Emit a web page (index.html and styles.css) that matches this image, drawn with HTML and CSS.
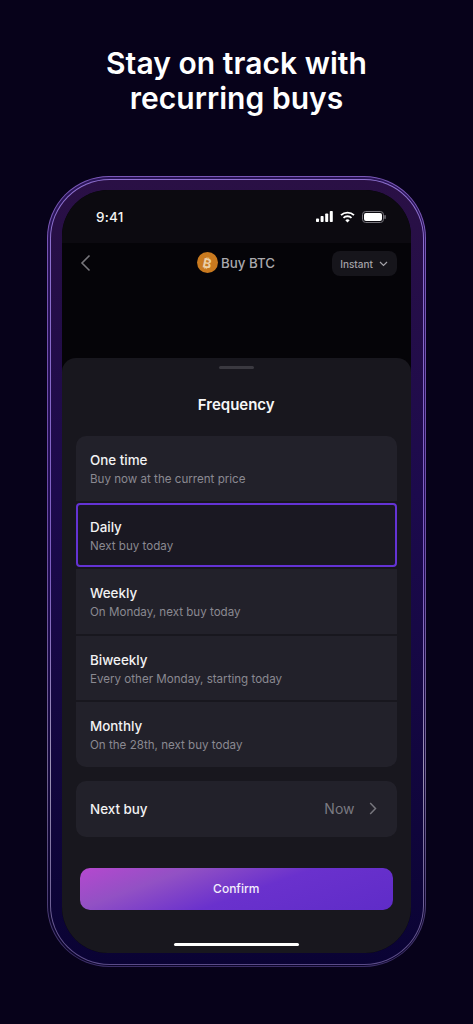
FILE: index.html
```html
<!DOCTYPE html>
<html lang="en">
<head>
<meta charset="utf-8">
<title>Stay on track with recurring buys</title>
<link rel="stylesheet" href="styles.css">
</head>
<body>
<main class="page">
  <h1 class="headline">Stay on track with<br>recurring buys</h1>
  <div class="phone">
    <div class="phone-inner">
      <div class="ring">
        <div class="bezel">
          <div class="screen">
            <div class="status">
              <span class="clock">9:41</span>
              <div class="status-icons">
                <svg width="17" height="11" viewBox="0 0 17 11"><rect x="0" y="7.500" width="3" height="3.500" rx=".8"/><rect x="4.600" y="5" width="3" height="6" rx=".8"/><rect x="9.200" y="2.500" width="3" height="8.500" rx=".8"/><rect x="13.800" y="0" width="3" height="11" rx=".8"/></svg>
                <svg width="15" height="12" viewBox="0 0 15 12"><path d="M1 4.200a9.300 9.300 0 0 1 13 0" fill="none" stroke="#fff" stroke-width="1.800"/><path d="M3.500 6.900a5.700 5.700 0 0 1 8 0" fill="none" stroke="#fff" stroke-width="1.800"/><path d="M5.300 9.200a3.200 3.200 0 0 1 4.400 0L7.500 11.600z"/></svg>
                <svg width="24" height="12" viewBox="0 0 24 12"><rect x=".5" y=".5" width="21" height="11" rx="3.200" fill="none" stroke="#77757c"/><rect x="2" y="2" width="18" height="8" rx="2"/><rect x="22.300" y="4" width="1.500" height="4" rx=".7" fill="#77757c"/></svg>
              </div>
            </div>
            <div class="nav">
              <svg class="back" width="11" height="18" viewBox="0 0 11 18"><path d="M9.500 1.500 2 9l7.500 7.500" fill="none" stroke="#77767b" stroke-width="1.600"/></svg>
              <div class="nav-title">
                <span class="coin"><span class="coin-mark">₿</span></span>
                <span>Buy BTC</span>
              </div>
              <div class="speed">
                <span>Instant</span>
                <svg width="9" height="6" viewBox="0 0 9 6"><path d="M1 1l3.500 3.500L8 1" fill="none" stroke="#a3a2a8" stroke-width="1.200"/></svg>
              </div>
            </div>
            <section class="sheet">
              <div class="handle"></div>
              <h2 class="sheet-title">Frequency</h2>
              <div class="options">
                <div class="option first">
                  <div class="option-name">One time</div>
                  <div class="option-desc">Buy now at the current price</div>
                </div>
                <div class="option selected">
                  <div class="option-name">Daily</div>
                  <div class="option-desc">Next buy today</div>
                </div>
                <div class="option">
                  <div class="option-name">Weekly</div>
                  <div class="option-desc">On Monday, next buy today</div>
                </div>
                <div class="option">
                  <div class="option-name">Biweekly</div>
                  <div class="option-desc">Every other Monday, starting today</div>
                </div>
                <div class="option last">
                  <div class="option-name">Monthly</div>
                  <div class="option-desc">On the 28th, next buy today</div>
                </div>
              </div>
              <div class="next-buy">
                <span class="option-name">Next buy</span>
                <div class="next-value">
                  <span>Now</span>
                  <svg width="8" height="13" viewBox="0 0 8 13"><path d="M1.200 1 6.500 6.500 1.200 12" fill="none" stroke="#77767d" stroke-width="1.500"/></svg>
                </div>
              </div>
              <button class="confirm">Confirm</button>
              <div class="home"></div>
            </section>
          </div>
        </div>
      </div>
    </div>
  </div>
</main>
</body>
</html>
```
FILE: styles.css
```css
* { box-sizing: border-box; }
html, body { margin: 0; padding: 0; }
body {
  width: 473px;
  height: 1024px;
  overflow: hidden;
  background: #07021a;
  font-family: Inter, "Noto Sans", sans-serif;
  color: #fff;
}
.page {
  height: 1024px;
  padding: 46px 47px 0;
  display: flex;
  flex-direction: column;
}
.headline {
  margin: 0 -20px;
  font-size: 30px;
  line-height: 35px;
  font-weight: 600;
  text-align: center;
  letter-spacing: 0.05px;
  color: #fff;
}
.phone {
  margin-top: 60px;
  width: 379px;
  height: 791px;
  padding: 1px;
  border-radius: 62px;
  background: linear-gradient(180deg, #7a58b8 0%, #6a4aa6 40%, #6f6190 75%, #3a2c66 100%);
}
.phone-inner {
  height: 100%;
  padding: 1.500px;
  border-radius: 61px;
  background: linear-gradient(180deg, #2a1458 0%, #1f0c52 50%, #0a0428 100%);
}
.ring {
  height: 100%;
  padding: 1px;
  border-radius: 59.500px;
  background: linear-gradient(180deg, #8f72d0 0%, #7c5cc0 50%, #9d93b5 75%, #5a4a88 100%);
}
.bezel {
  height: 100%;
  padding: 10.500px 12px 10.500px 11.500px;
  border-radius: 58.500px;
  background: linear-gradient(180deg, #2a1045 0%, #1c0a4c 40%, #0a0334 100%);
}
.screen {
  height: 100%;
  border-radius: 46px;
  overflow: hidden;
  background: #050408;
  display: flex;
  flex-direction: column;
}
.status {
  height: 53px;
  flex: none;
  padding: 0 25px 0 34px;
  background: #0c0a10;
  display: flex;
  align-items: center;
  justify-content: space-between;
}
.clock { font-size: 13.500px; font-weight: 500; color: #f4f4f4; letter-spacing: 0.2px; }
.status-icons { display: flex; align-items: center; gap: 7px; }
.status-icons svg { fill: #fff; display: block; }
.nav {
  height: 115px;
  flex: none;
  padding: 8px 14px 0 18px;
  display: flex;
  align-items: flex-start;
  position: relative;
}
.back { margin-top: 3px; }
.nav-title {
  position: absolute;
  left: 135px;
  top: 9px;
  display: flex;
  align-items: center;
  gap: 3px;
  font-size: 13.300px;
  font-weight: 500;
  color: #aaa9ad;
}
.coin {
  width: 21px;
  height: 21px;
  border-radius: 50%;
  background: #c97a1f;
  color: #ecd0a6;
  font-size: 13px;
  font-weight: 700;
  display: flex;
  align-items: center;
  justify-content: center;
}
.coin-mark { display: block; transform: rotate(12deg); }
.speed {
  margin-left: auto;
  height: 25px;
  width: 65px;
  border-radius: 8px;
  background: #16151b;
  font-size: 10px;
  font-weight: 500;
  color: #a3a2a8;
  display: flex;
  align-items: center;
  justify-content: center;
  gap: 6px;
}
.sheet {
  flex: 1;
  border-radius: 14px 14px 0 0;
  background: #18171e;
  padding: 8px 14px 0;
  display: flex;
  flex-direction: column;
}
.handle {
  align-self: center;
  width: 35px;
  height: 3px;
  border-radius: 2px;
  background: #3a3940;
}
.sheet-title {
  margin: 21px 0 0;
  font-size: 15px;
  line-height: 30px;
  font-weight: 600;
  text-align: center;
  color: #f6f6f7;
}
.options {
  margin-top: 16px;
  display: flex;
  flex-direction: column;
  gap: 2px;
}
.option {
  height: 64.500px;
  padding: 15px 14px 0;
  background: #22212a;
}
.option.first { border-radius: 10px 10px 0 0; }
.option.last { border-radius: 0 0 10px 10px; }
.option.selected {
  padding: 13px 12px 0;
  background: #1a1822;
  border: 2px solid #6433d4;
  border-radius: 4px;
}
.option-name {
  font-size: 13.400px;
  line-height: 18px;
  font-weight: 500;
  color: #f2f2f3;
}
.option-desc {
  margin-top: 1px;
  font-size: 11.600px;
  line-height: 18px;
  font-weight: 400;
  color: #8a8991;
}
.next-buy {
  margin-top: 14px;
  height: 56px;
  padding: 0 20px 0 14px;
  border-radius: 10px;
  background: #22212a;
  display: flex;
  align-items: center;
  justify-content: space-between;
}
.next-value {
  display: flex;
  align-items: center;
  gap: 14px;
  font-size: 14px;
  color: #7b7a81;
}
.confirm {
  margin: 31px 4px 0;
  height: 42px;
  border: 0;
  border-radius: 10px;
  background: linear-gradient(160deg, #b548cf 0%, #9251c4 26%, #6a31cd 55%, #5f2cc8 100%);
  font-family: inherit;
  font-size: 12px;
  font-weight: 500;
  color: #f3eefc;
}
.home {
  align-self: center;
  margin-top: 33px;
  width: 125px;
  height: 3px;
  border-radius: 2px;
  background: #fff;
}
```
